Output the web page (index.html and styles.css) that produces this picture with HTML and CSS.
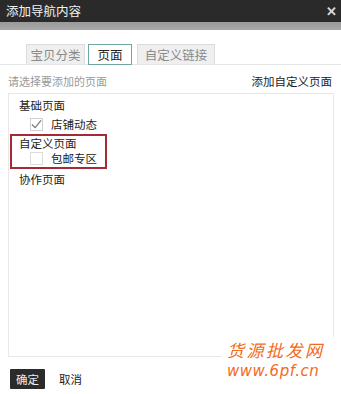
FILE: index.html
```html
<!DOCTYPE html>
<html lang="zh">
<head>
<meta charset="utf-8">
<link rel="stylesheet" href="styles.css">
</head>
<body>
<div class="dialog">
  <div class="titlebar">
    <span class="title">添加导航内容</span>
    <span class="close">✕</span>
  </div>
  <div class="strip"></div>
  <div class="tabs">
    <span class="tab t1">宝贝分类</span>
    <span class="tab t2 active">页面</span>
    <span class="tab t3">自定义链接</span>
  </div>
  <div class="hintrow">
    <span class="hint">请选择要添加的页面</span>
    <span class="addlink">添加自定义页面</span>
  </div>
  <div class="box">
    <div class="group">基础页面</div>
    <div class="item"><span class="cb checked"><svg width="12" height="10" viewBox="0 0 12 10"><path d="M1 5.5 L4.5 9 L11 1" fill="none" stroke="#777" stroke-width="1.3"/></svg></span>店铺动态</div>
    <div class="highlight">
      <div class="group">自定义页面</div>
      <div class="item"><span class="cb"></span>包邮专区</div>
    </div>
    <div class="group">协作页面</div>
  </div>
  <div class="footer">
    <span class="btn primary">确定</span>
    <span class="btn">取消</span>
  </div>
  <div class="watermark">
    <div class="wm1">货源批发网</div>
    <div class="wm2">www.6pf.cn</div>
  </div>
</div>
</body>
</html>
```
FILE: styles.css
```css
html, body {
  margin: 0;
  padding: 0;
  background: #fff;
}
body {
  width: 341px;
  height: 394px;
  overflow: hidden;
  font-family: "Noto Sans CJK SC", "Liberation Sans", sans-serif;
  font-size: 12px;
  color: #222;
}
.dialog {
  position: relative;
  width: 341px;
  height: 394px;
}
.titlebar {
  height: 22px;
  background: #2a2a2a;
  display: flex;
  align-items: center;
  justify-content: space-between;
  padding: 0 4px 0 6px;
}
.title {
  color: #f2f2f2;
  font-size: 12.5px;
  line-height: 22px;
}
.close {
  color: #d8d8d8;
  font-size: 13px;
  font-weight: bold;
  line-height: 22px;
}
.strip {
  height: 8px;
  background: linear-gradient(#9a9a9a, #a8a8a8);
}
.tabs {
  display: flex;
  padding: 12px 0 0 26px;
  height: 22px;
  border-bottom: 1px solid #e6e6e6;
  align-items: flex-end;
}
.tab {
  display: block;
  box-sizing: border-box;
  height: 20px;
  line-height: 19px;
  text-align: center;
  background: #efefef;
  border: 1px solid #dcdcdc;
  border-bottom: none;
  color: #8a8a8a;
  font-size: 12.5px;
}
.t1 { width: 59px; }
.t2 { width: 44px; margin-left: 3px; }
.t3 { width: 78px; margin-left: 5px; }
.tab.active {
  background: #fff;
  color: #222;
  border: 1px solid #6fa7a0;
  height: 21px;
  margin-bottom: -1px;
}
.hintrow {
  display: flex;
  justify-content: space-between;
  padding: 8px 9px 0 8px;
  height: 20px;
  line-height: 16px;
}
.hint {
  color: #9a9a9a;
  font-size: 11px;
}
.addlink {
  color: #222;
  font-size: 11.5px;
}
.box {
  margin: 0 7px 0 8px;
  height: 264px;
  border: 1px solid #e8e8e8;
  padding-top: 2px;
  box-sizing: border-box;
}
.group {
  height: 19px;
  line-height: 19px;
  padding-left: 10px;
  font-size: 11.5px;
}
.item {
  height: 18px;
  line-height: 18px;
  padding-left: 21px;
  display: flex;
  align-items: center;
  font-size: 11.5px;
}
.cb {
  width: 11px;
  height: 11px;
  border: 1px solid #dcdcdc;
  margin-right: 8px;
  display: flex;
  align-items: center;
  justify-content: center;
  background: #fff;
}
.cb.checked {
  border-color: #d0d0d0;
}
.highlight {
  width: 97px;
  height: 35px;
  box-sizing: border-box;
  border: 2px solid #a42a36;
  margin: 1px 0 0 1px;
}
.highlight .group {
  height: 14px;
  line-height: 14px;
  padding-left: 7px;
}
.highlight .item {
  height: 17px;
  line-height: 17px;
  padding-left: 18px;
}
.highlight + .group {
  margin-top: 1px;
}
.footer {
  display: flex;
  align-items: center;
  gap: 14px;
  padding: 12px 0 0 10px;
}
.btn {
  display: block;
  height: 20px;
  line-height: 20px;
  font-size: 11.5px;
  color: #222;
}
.btn.primary {
  background: #2b2b2b;
  color: #eee;
  padding: 0 6px;
  border-radius: 1px;
}
.watermark {
  position: absolute;
  right: 6px;
  bottom: 14px;
  width: 108px;
  background: #fff;
  padding: 0 0 0 5px;
  color: #f36a1a;
  font-family: "Noto Sans CJK SC", sans-serif;
}
.wm1 {
  font-size: 17px;
  line-height: 25px;
  letter-spacing: 2.5px;
  font-style: italic;
}
.wm2 {
  font-size: 15px;
  line-height: 18px;
  font-family: "DejaVu Sans", sans-serif;
  letter-spacing: 0.5px;
  color: #f36a1a;
  font-style: italic;
}
```
